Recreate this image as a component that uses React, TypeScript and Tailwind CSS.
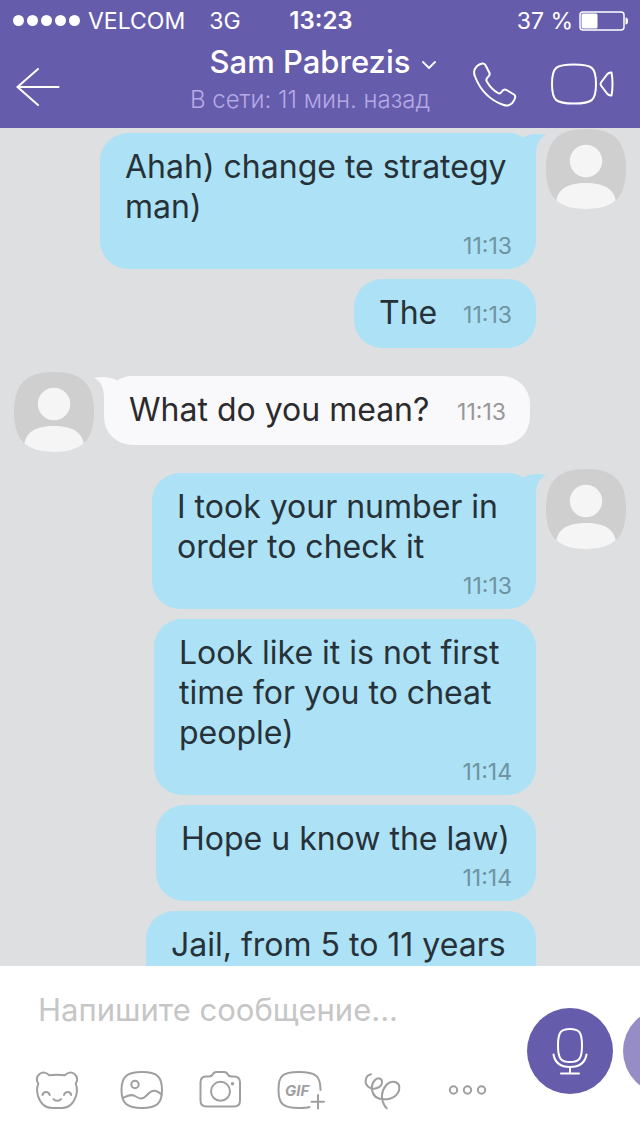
import React from 'react';

interface Message {
  id: number;
  lines: string[];
  time?: string;
  mine: boolean;
  width: string;
  showAvatar?: boolean;
  inlineTime?: boolean;
}

const messages: Message[] = [
  { id: 1, lines: ['Ahah) change te strategy', 'man)'], time: '11:13', mine: true, width: 'min-w-[436px]', showAvatar: true },
  { id: 2, lines: ['The'], time: '11:13', mine: true, width: 'min-w-[182px]', inlineTime: true },
  { id: 3, lines: ['What do you mean?'], time: '11:13', mine: false, width: 'min-w-[426px]', showAvatar: true, inlineTime: true },
  { id: 4, lines: ['I took your number in', 'order to check it'], time: '11:13', mine: true, width: 'min-w-[384px]', showAvatar: true },
  { id: 5, lines: ['Look like it is not first', 'time for you to cheat', 'people)'], time: '11:14', mine: true, width: 'min-w-[382px]' },
  { id: 6, lines: ['Hope u know the law)'], time: '11:14', mine: true, width: 'min-w-[380px]' },
  { id: 7, lines: ['Jail, from 5 to 11 years'], mine: true, width: 'min-w-[390px]' },
];

const StatusBar: React.FC = () => (
  <div className="grid h-10 grid-cols-[1fr_auto_1fr] items-center pt-px pr-[11px] pl-[13px] text-[23px] leading-7">
    <div className="flex items-center whitespace-nowrap">
      <div className="mr-2 flex gap-[3px]">
        {[0, 1, 2, 3, 4].map((i) => (
          <span key={i} className="size-[11px] rounded-full bg-white" />
        ))}
      </div>
      <span>VELCOM</span>
      <span className="ml-6">3G</span>
    </div>
    <span className="text-2xl leading-7 font-semibold">13:23</span>
    <div className="flex items-center justify-end gap-[6px] whitespace-nowrap">
      <span>37 %</span>
      <svg width="50" height="20" viewBox="0 0 50 20" fill="none" aria-hidden="true">
        <rect x="1" y="1" width="44" height="18" rx="3" stroke="white" strokeWidth="1.5" />
        <rect x="2.5" y="2.5" width="16" height="15" rx="1.5" fill="white" />
        <path d="M46.5 6.5C48.5 6.5 49 8 49 10S48.5 13.5 46.5 13.5Z" fill="white" />
      </svg>
    </div>
  </div>
);

const NavBar: React.FC = () => (
  <div className="flex h-[88px] pr-[26px] pl-4">
    <button type="button" aria-label="Назад" className="flex h-[94px] items-center">
      <svg width="44" height="40" viewBox="0 0 44 40" fill="none" stroke="white" strokeWidth="2" strokeLinecap="round">
        <path d="M22 2L1.5 20L22 38M1.5 20H42.5" />
      </svg>
    </button>
    <div className="flex flex-1 flex-col items-center pl-[88px] whitespace-nowrap">
      <button type="button" className="mt-[2px] flex items-center gap-3 pl-[26px] text-[31px] leading-10 font-medium">
        Sam Pabrezis
        <svg width="14" height="16" viewBox="0 0 14 16" fill="none" stroke="white" strokeWidth="1.8" strokeLinecap="round" strokeLinejoin="round">
          <path d="M1 8L7 14L13 8" />
        </svg>
      </button>
      <p className="mt-1 text-2xl leading-7 font-light text-[#b5a9e6]">В сети: 11 мин. назад</p>
    </div>
    <div className="flex gap-8 pt-[22px]">
      <button type="button" aria-label="Позвонить" className="h-[45px]">
        <svg width="46" height="45" viewBox="0 0 46 45" fill="none" stroke="white" strokeWidth="2" strokeLinejoin="round">
          <path d="M2.5 8C4 4.5 7 2 10.5 1.5C12 1.3 13 2 13.7 3.5L17.5 11C18.2 12.6 17.3 13.8 16 15C14.3 16.5 13.7 17.5 14.8 19.5C18 25 21.5 28.5 26 31C27.5 31.8 28.6 31.3 29.5 30C31 27.7 32.5 27 34.5 28L42 32.5C43.3 33.4 43.5 34.5 43 36C41.8 40 39.5 42.5 36 43.5C34.5 43.8 33 43.5 31 42.8C18 38 8 27.5 3 14.5C2 12 1.8 10 2.5 8Z" />
        </svg>
      </button>
      <button type="button" aria-label="Видеозвонок" className="h-[45px]">
        <svg width="64" height="45" viewBox="0 0 64 45" fill="none" stroke="white" strokeWidth="2" strokeLinejoin="round">
          <path d="M24 2.5C42 2.5 46 5 46 22S42 41.5 24 41.5S2 39 2 22S6 2.5 24 2.5Z" />
          <path d="M51 23.5C50.3 22.5 50.3 21.5 51 20.5L57 12.5C58.5 10.7 60 10.3 61.5 10.5C62.3 14 62.5 18 62.5 22S62.3 30 61.5 33.5C60 33.7 58.5 33.3 57 31.5Z" />
        </svg>
      </button>
    </div>
  </div>
);

const Avatar: React.FC = () => (
  <svg width="80" height="80" viewBox="0 0 80 80" className="shrink-0" aria-hidden="true">
    <defs>
      <clipPath id="avatar-shape">
        <path d="M40 0C68 0 80 12 80 40S68 80 40 80S0 68 0 40S12 0 40 0Z" />
      </clipPath>
    </defs>
    <g clipPath="url(#avatar-shape)">
      <rect width="80" height="80" fill="#cfcfcf" />
      <circle cx="40" cy="32" r="16.2" fill="#f5f5f5" />
      <path d="M10 80V74C11 60 22 54 40 54S69 60 70 74V80Z" fill="#f5f5f5" />
    </g>
  </svg>
);

const Tail: React.FC<{ mine: boolean }> = ({ mine }) => (
  <svg
    width="42"
    height="30"
    viewBox="0 0 42 30"
    className={mine ? 'absolute top-0 -right-3 fill-[#ade1f5]' : 'absolute top-0 -left-3 -scale-x-100 fill-[#f9f9fb]'}
    aria-hidden="true"
  >
    <path d="M0 0C6 0 12 2 16 5C23 1 31 0 40 2C33 5 30 12 30 22V30H0Z" />
  </svg>
);

const Bubble: React.FC<{ message: Message }> = ({ message }) => {
  const { lines, time, mine, width, showAvatar, inlineTime } = message;

  const getLayout = () => {
    if (inlineTime) return 'flex items-center justify-between pb-[15px]';
    return time ? 'pb-[11px]' : 'pb-12';
  };

  return (
    <div
      className={`relative rounded-[28px] pt-[14px] pr-6 pl-[25px] whitespace-nowrap ${width} ${getLayout()} ${
        mine ? 'bg-[#ade1f5] text-[#263238]' : 'bg-[#f9f9fb] text-[#2b2b2d]'
      }`}
    >
      {showAvatar && <Tail mine={mine} />}
      <p className="relative text-[32px] leading-10">
        {lines.map((line) => (
          <span key={line} className="block">{line}</span>
        ))}
      </p>
      {time && (
        <time
          className={`block text-right text-[23px] leading-6 ${mine ? 'text-[#6f93a1]' : 'text-[#97979a]'} ${
            inlineTime ? 'pt-1' : 'mt-[7px]'
          }`}
        >
          {time}
        </time>
      )}
    </div>
  );
};

const MessageRow: React.FC<{ message: Message }> = ({ message }) => {
  if (!message.mine) {
    return (
      <div className="mt-[18px] mb-[15px] flex items-start gap-[10px] pl-[14px]">
        <div className="-my-1 flex"><Avatar /></div>
        <Bubble message={message} />
      </div>
    );
  }

  return (
    <div className="flex items-start justify-end gap-[10px] pr-[14px]">
      <Bubble message={message} />
      <div className="-mt-1 w-20">{message.showAvatar && <Avatar />}</div>
    </div>
  );
};

const tools = [
  {
    label: 'Стикеры',
    width: 44,
    icon: (
      <>
        <path d="M3.3 13.5A6.5 6.5 0 1 1 14 5.2C19 4.7 25 4.7 30 5.2A6.5 6.5 0 1 1 40.7 13.5C42.3 18 42.3 22 41 26C38.5 33.5 34 38 27 38H17C10 38 5.5 33.5 3 26C1.7 22 1.7 18 3.3 13.5Z" />
        <path d="M7.5 25C8.5 21 13.5 21 14.7 25M29 25C30.2 21 35.2 21 36.2 25M18.5 29C20 31.3 24.5 31.3 26 29" />
      </>
    ),
  },
  {
    label: 'Галерея',
    width: 48,
    icon: (
      <>
        <path d="M27 2C42 2 47 6.5 47 20S42 38 27 38S6.5 33.5 6.5 20S12 2 27 2Z" />
        <circle cx="20" cy="14.5" r="3.7" />
        <path d="M8 28C12 26 16 23.5 20 26C24 28.5 27 30 31 26C35 21.5 39 17.5 46.5 24.5" />
      </>
    ),
  },
  {
    label: 'Камера',
    width: 42,
    icon: (
      <>
        <path d="M7 6.5H10C12 6.5 13 6 13.7 4.5C14.5 2.5 15.5 2 17.5 2H25C27 2 28 2.5 28.8 4.5C29.5 6 30.5 6.5 32.5 6.5H35C39 6.5 41 8.5 41 12.5V30.5C41 34.5 39 36.5 35 36.5H7.5C3.5 36.5 1.5 34.5 1.5 30.5V12.5C1.5 8.5 3.5 6.5 7 6.5Z" />
        <circle cx="21.5" cy="21.3" r="9.5" />
        <circle cx="33.5" cy="13.7" r="1.7" fill="#9f9f9f" stroke="none" />
      </>
    ),
  },
  {
    label: 'GIF',
    width: 48,
    icon: (
      <>
        <path d="M43.5 20C43.5 6 39 2 22 2S1.5 6 1.5 20S6 38 22 38C26 38 30 38 32.5 37" />
        <path d="M41 25V38.5M34.5 31.7H47" />
        <text x="8" y="25.5" fill="#9f9f9f" stroke="none" fontSize="15" fontWeight="700" fontStyle="italic">GIF</text>
      </>
    ),
  },
  {
    label: 'Рисунок',
    width: 44,
    icon: (
      <path d="M10 4.3C4.5 5.5 2.5 13 7.5 17C12.5 20.5 21 18 21 12C21 8 16.5 7 13.5 10.5C11 13.5 10.5 17 11 20C12 26.5 17 29.3 23.3 29.3C32.7 29.3 38.7 23.7 38.3 17C38 12 32.7 10.7 28.3 12.7C22.7 16 19.3 23.7 21.7 31.3C23 35 24 37 25.7 38.3" />
    ),
  },
  {
    label: 'Ещё',
    width: 48,
    icon: (
      <>
        <circle cx="12.5" cy="20" r="3.7" />
        <circle cx="26.5" cy="20" r="3.7" />
        <circle cx="40.5" cy="20" r="3.7" />
      </>
    ),
  },
];

const Composer: React.FC = () => (
  <div className="flex shrink-0 bg-white">
    <div className="min-w-0 flex-1 pt-6 pb-[26px] pl-[35px]">
      <input
        type="text"
        aria-label="Сообщение"
        placeholder="Напишите сообщение..."
        className="block h-10 w-full bg-transparent px-[3px] text-[31px] text-[#2b2b2d] outline-none placeholder:text-[#c6c6c6]"
      />
      <div className="mt-10 flex gap-9">
        {tools.map((tool) => (
          <button key={tool.label} type="button" aria-label={tool.label} className="shrink-0">
            <svg width={tool.width} height="40" viewBox={`0 0 ${tool.width} 40`} fill="none" stroke="#9f9f9f" strokeWidth="2" strokeLinecap="round" strokeLinejoin="round">
              {tool.icon}
            </svg>
          </button>
        ))}
      </div>
    </div>
    <div className="flex w-[113px] shrink-0 gap-[10px] overflow-hidden pt-[42px]">
      <button type="button" aria-label="Голосовое сообщение" className="flex size-[86px] shrink-0 items-center justify-center rounded-full bg-[#665cac]">
        <svg width="48" height="48" viewBox="0 0 48 48" fill="none" stroke="white" strokeWidth="2" strokeLinecap="round">
          <path d="M24 2C33 2 36 5 36 18.5S33 35 24 35S12 32 12 18.5S15 2 24 2Z" />
          <path d="M7.5 27.5C9 36 14 40 24 40S39 36 40.5 27.5M24 40V46.5M15 46.5H33" />
        </svg>
      </button>
      <button type="button" aria-label="Видеосообщение" className="size-[86px] shrink-0 rounded-full bg-[#968dc6]" />
    </div>
  </div>
);

export default function App() {
  return (
    <div className="flex h-screen w-full flex-col overflow-hidden bg-[#dedfe1] font-['Inter','Noto_Sans',sans-serif]">
      <header className="shrink-0 bg-[#665cac] text-white">
        <StatusBar />
        <NavBar />
      </header>
      <main className="flex min-h-0 flex-1 flex-col gap-[10px] overflow-hidden pt-[5px]">
        {messages.map((message) => (
          <MessageRow key={message.id} message={message} />
        ))}
      </main>
      <Composer />
    </div>
  );
}
